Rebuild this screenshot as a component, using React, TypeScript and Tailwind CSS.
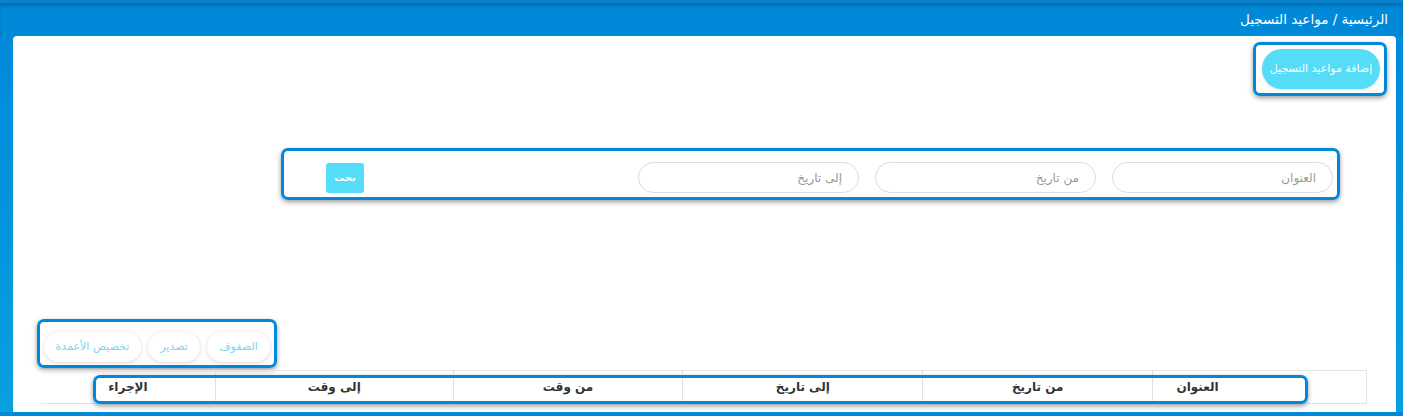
import React from "react";

const frame =
  "border-[3px] border-[#0088d9] rounded-[7px] shadow-[0_2px_5px_rgba(0,0,0,0.4)]";

const columns = [
  { label: "العنوان", width: "w-[214px]", extra: "border-l pr-[124px]" },
  { label: "من تاريخ", width: "w-[230px]", extra: "border-l" },
  { label: "إلى تاريخ", width: "w-[240px]", extra: "border-l" },
  { label: "من وقت", width: "w-[230px]", extra: "border-l" },
  { label: "إلى وقت", width: "w-[238px]", extra: "border-l" },
  { label: "الإجراء", width: "w-[174px]", extra: "" },
];

export default function App() {
  return (
    <div
      dir="rtl"
      className="h-[416px] w-full overflow-hidden bg-gradient-to-b from-[#0088d9] to-[#09a0e0] font-['DejaVu_Sans',sans-serif]"
    >
      <div className="h-[3px] bg-[#0a82cc]" />
      {/* Breadcrumb */}
      <div className="flex h-[33px] items-center bg-[#0088d9] pr-[15px] text-[13.5px] text-white shadow-[inset_0_3px_3px_rgba(0,0,0,0.18)]">
        الرئيسية / مواعيد التسجيل
      </div>

      {/* Main panel */}
      <div className="ml-[13px] mr-[7px] h-[376px] rounded-t-[4px] bg-white">
        {/* Add button */}
        <div className="flex pr-[9px] pt-[6px]">
          <div className={`${frame} flex h-[54px] w-[134px] items-start pr-[4px] pt-[4px]`}>
            <button className="flex h-[40px] w-[118px] items-center justify-center rounded-full bg-[#55dcf7] text-[11px] text-white shadow-[0_1px_3px_rgba(0,0,0,0.12)]">
              إضافة مواعيد التسجيل
            </button>
          </div>
        </div>

        {/* Search filters */}
        <div className="mt-[52px] flex pr-[56px]">
          <div className={`${frame} flex h-[52px] w-[1059px] items-start pl-[42px] pr-[4px] pt-[11px]`}>
            <div className="flex gap-[16px]">
              {["العنوان", "من تاريخ", "إلى تاريخ"].map((p) => (
                <div
                  key={p}
                  className="flex h-[31px] w-[221px] items-center rounded-full border border-[#dcdcdc] pr-[16px] text-[12px] text-[#999]"
                >
                  {p}
                </div>
              ))}
            </div>
            <button className="mr-auto mt-[1px] flex h-[30px] w-[38px] items-start justify-center rounded-[3px] bg-[#55dcf7] pt-[7px] text-[10px] font-bold text-white">
              بحث
            </button>
          </div>
        </div>

        {/* Table toolbar */}
        <div className="mt-[119px] flex justify-end pl-[24px]">
          <div className={`${frame} flex h-[49px] w-[240px] items-start gap-[7px] pr-[4px] pt-[10px]`}>
            {[
              { t: "الصفوف", w: "w-[63px]" },
              { t: "تصدير", w: "w-[52px]" },
              { t: "تخصيص الأعمدة", w: "w-[97px]" },
            ].map((b) => (
              <button
                key={b.t}
                className={`flex h-[30px] ${b.w} items-center justify-center rounded-full bg-white text-[11px] text-[#7dd6ee] shadow-[0_1px_4px_rgba(0,0,0,0.16)]`}
              >
                {b.t}
              </button>
            ))}
          </div>
        </div>

        {/* Table header */}
        <div className="mt-[2px] flex justify-end pl-[28px]">
          <div className="relative flex h-[34px] w-[1326px] border-y border-r border-[#e3e3e3]">
            {columns.map((c) => (
              <div
                key={c.label}
                className={`flex h-full ${c.width} ${c.extra} items-center justify-center border-[#e3e3e3] text-[12px] font-bold text-[#333]`}
              >
                {c.label}
              </div>
            ))}
            <div className={`absolute left-[52px] top-[4px] h-[29px] w-[1215px] ${frame}`} />
          </div>
        </div>
      </div>
      <div className="h-[4px] bg-[#0088d9]" />
    </div>
  );
}
